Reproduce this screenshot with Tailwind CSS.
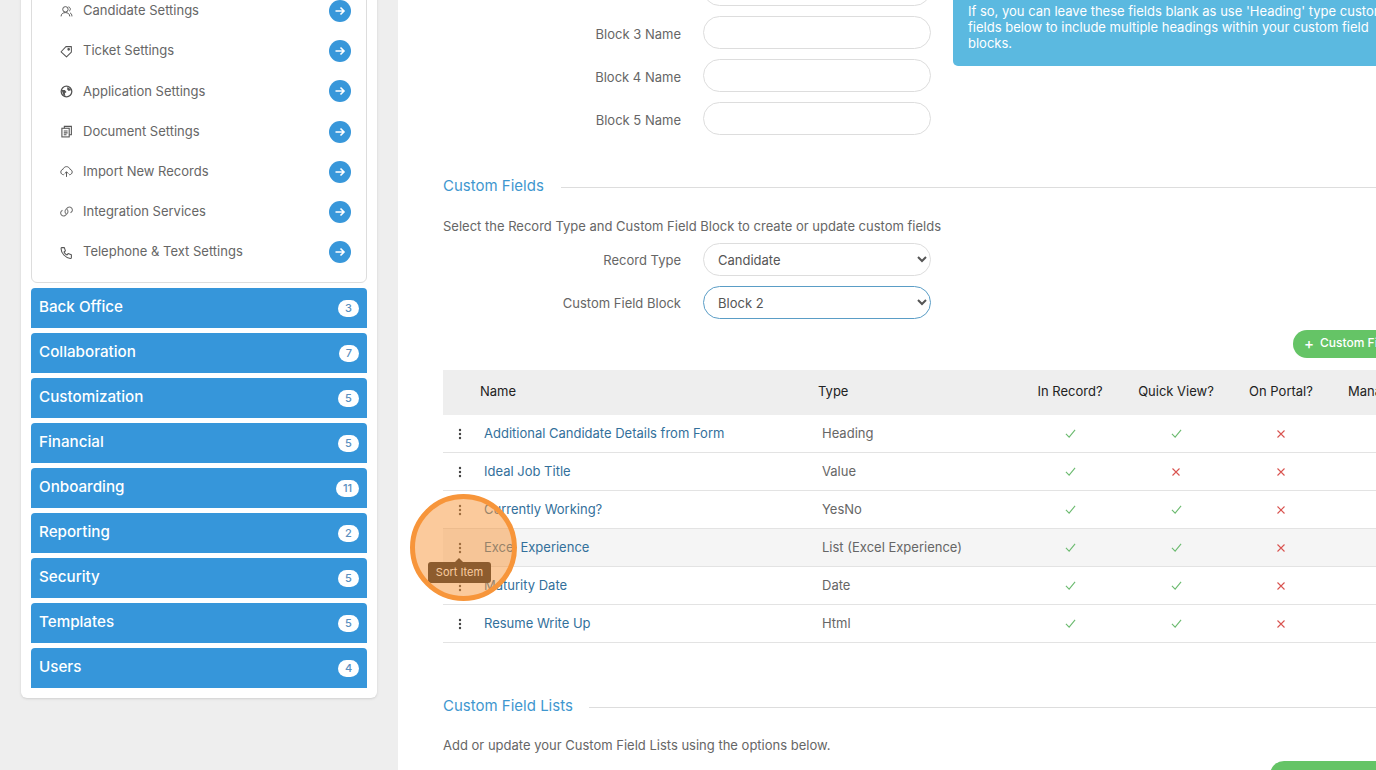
<!DOCTYPE html>
<html lang="en">
<head>
    <meta charset="UTF-8">
    <meta name="viewport" content="width=device-width, initial-scale=1.0">
    <script src="https://cdn.jsdelivr.net/npm/@tailwindcss/browser@4"></script>
    <title>Custom Fields</title>
</head>
<body class="relative h-[770px] w-[1376px] overflow-hidden bg-[#eeeeee] font-['Inter','Liberation_Sans',sans-serif] text-[13px] text-[#666666]">
    <div class="flex h-full items-start">
        <!-- sidebar -->
        <aside class="ml-[21px] mt-[-20px] w-[356px] shrink-0 rounded-md bg-white p-[10px] shadow-sm">
            <div class="rounded-md border border-[#dddddd] pb-[10px]">
                <div class="flex h-[40.17px] items-center pl-[28px] pr-[15px]">
                    <svg class="mr-[10px] h-[13px] w-[13px] shrink-0" viewBox="0 0 24 24" fill="none" stroke="#555" stroke-width="1.800"><circle cx="10" cy="8" r="5"/><path d="M2 21c0-4.500 3.500-7 8-7s8 2.500 8 7M15.500 3.500c2.500.5 4 2.500 3.500 5-.2 1.200-1 2.200-2 2.800M18.500 14.500c2.300 1 3.500 3.200 3.500 6.500"/></svg>
                    <span class="flex-1">Candidate Settings</span>
                    <span class="flex h-[22px] w-[22px] items-center justify-center rounded-full bg-[#3897da]"><svg class="h-[12px] w-[12px]" viewBox="0 0 24 24" fill="none" stroke="#fff" stroke-width="3.200"><path d="M3 12h17M13 5l7 7-7 7"/></svg></span>
                </div>
                <div class="flex h-[40.17px] items-center pl-[28px] pr-[15px]">
                    <svg class="mr-[10px] h-[13px] w-[13px] shrink-0" viewBox="0 0 24 24" fill="none" stroke="#555" stroke-width="1.900"><path d="M11 3h10v10l-9 9-10-9.500z" stroke-linejoin="round"/><circle cx="16" cy="8" r="1.500" fill="#555"/></svg>
                    <span class="flex-1">Ticket Settings</span>
                    <span class="flex h-[22px] w-[22px] items-center justify-center rounded-full bg-[#3897da]"><svg class="h-[12px] w-[12px]" viewBox="0 0 24 24" fill="none" stroke="#fff" stroke-width="3.200"><path d="M3 12h17M13 5l7 7-7 7"/></svg></span>
                </div>
                <div class="flex h-[40.17px] items-center pl-[28px] pr-[15px]">
                    <svg class="mr-[10px] h-[13px] w-[13px] shrink-0" viewBox="0 0 24 24" fill="none" stroke="#555" stroke-width="2.400"><circle cx="12" cy="12" r="9.800"/><path d="M3 9l6 0 3 4-3 2 1 6-4-3zM14 3l7 6-5 2-3-3z" fill="#555" stroke="none"/></svg>
                    <span class="flex-1">Application Settings</span>
                    <span class="flex h-[22px] w-[22px] items-center justify-center rounded-full bg-[#3897da]"><svg class="h-[12px] w-[12px]" viewBox="0 0 24 24" fill="none" stroke="#fff" stroke-width="3.200"><path d="M3 12h17M13 5l7 7-7 7"/></svg></span>
                </div>
                <div class="flex h-[40.17px] items-center pl-[28px] pr-[15px]">
                    <svg class="mr-[10px] h-[13px] w-[13px] shrink-0" viewBox="0 0 24 24" fill="none" stroke="#555" stroke-width="2"><path d="M8 6V2.500h13V18h-4"/><rect x="3.500" y="6" width="13.500" height="16"/><path d="M7 11h7M7 14.500h7M7 18h5"/></svg>
                    <span class="flex-1">Document Settings</span>
                    <span class="flex h-[22px] w-[22px] items-center justify-center rounded-full bg-[#3897da]"><svg class="h-[12px] w-[12px]" viewBox="0 0 24 24" fill="none" stroke="#fff" stroke-width="3.200"><path d="M3 12h17M13 5l7 7-7 7"/></svg></span>
                </div>
                <div class="flex h-[40.17px] items-center pl-[28px] pr-[15px]">
                    <svg class="mr-[10px] h-[13px] w-[13px] shrink-0" viewBox="0 0 24 24" fill="none" stroke="#555" stroke-width="1.800"><path d="M7 18c-3 0-5.500-2-5.500-5 0-2.500 1.700-4.500 4-5C6.500 5 9 3 12 3s5.500 2 6.500 5c2.300.5 4 2.500 4 5 0 3-2.500 5-5.500 5M12 22v-9M8.500 16l3.500-3.500 3.500 3.500"/></svg>
                    <span class="flex-1">Import New Records</span>
                    <span class="flex h-[22px] w-[22px] items-center justify-center rounded-full bg-[#3897da]"><svg class="h-[12px] w-[12px]" viewBox="0 0 24 24" fill="none" stroke="#fff" stroke-width="3.200"><path d="M3 12h17M13 5l7 7-7 7"/></svg></span>
                </div>
                <div class="flex h-[40.17px] items-center pl-[28px] pr-[15px]">
                    <svg class="mr-[10px] h-[13px] w-[13px] shrink-0" viewBox="0 0 24 24" fill="none" stroke="#777" stroke-width="2"><path d="M13 8a5.500 5.500 0 0 1 0 8l-3.500 3.500a5.500 5.500 0 0 1-7.500-7.500l2.500-2.500M11 16a5.500 5.500 0 0 1 0-8l3.500-3.500a5.500 5.500 0 0 1 7.500 7.500l-2.500 2.500"/></svg>
                    <span class="flex-1">Integration Services</span>
                    <span class="flex h-[22px] w-[22px] items-center justify-center rounded-full bg-[#3897da]"><svg class="h-[12px] w-[12px]" viewBox="0 0 24 24" fill="none" stroke="#fff" stroke-width="3.200"><path d="M3 12h17M13 5l7 7-7 7"/></svg></span>
                </div>
                <div class="flex h-[40.17px] items-center pl-[28px] pr-[15px]">
                    <svg class="mr-[10px] h-[13px] w-[13px] shrink-0" viewBox="0 0 24 24" fill="none" stroke="#555" stroke-width="2"><path d="M3 3h5l2 6-2.500 2c1 2.500 3 4.500 5.500 5.500l2-2.500 6 2v5c0 1-1 2-2 2C10 22 2 13 2 5c0-1 .5-2 1-2z" stroke-linejoin="round"/></svg>
                    <span class="flex-1">Telephone &amp; Text Settings</span>
                    <span class="flex h-[22px] w-[22px] items-center justify-center rounded-full bg-[#3897da]"><svg class="h-[12px] w-[12px]" viewBox="0 0 24 24" fill="none" stroke="#fff" stroke-width="3.200"><path d="M3 12h17M13 5l7 7-7 7"/></svg></span>
                </div>
            </div>
            <div class="mt-[5px] flex flex-col gap-[5px] text-white">
                <div class="flex h-[40px] items-center justify-between rounded-t-[4px] bg-[#3696da] pl-[8px] pr-[8px]"><span class="-translate-y-px text-[15.200px] font-medium">Back Office</span><span class="flex h-[17px] min-w-[21px] items-center justify-center rounded-full bg-white px-[6px] text-[11px] font-medium text-[#5a8fc0]">3</span></div>
                <div class="flex h-[40px] items-center justify-between rounded-t-[4px] bg-[#3696da] pl-[8px] pr-[8px]"><span class="-translate-y-px text-[15.200px] font-medium">Collaboration</span><span class="flex h-[17px] min-w-[20px] items-center justify-center rounded-full bg-white px-[6px] text-[11px] font-medium text-[#5a8fc0]">7</span></div>
                <div class="flex h-[40px] items-center justify-between rounded-t-[4px] bg-[#3696da] pl-[8px] pr-[8px]"><span class="-translate-y-px text-[15.200px] font-medium">Customization</span><span class="flex h-[17px] min-w-[21px] items-center justify-center rounded-full bg-white px-[6px] text-[11px] font-medium text-[#5a8fc0]">5</span></div>
                <div class="flex h-[40px] items-center justify-between rounded-t-[4px] bg-[#3696da] pl-[8px] pr-[8px]"><span class="-translate-y-px text-[15.200px] font-medium">Financial</span><span class="flex h-[17px] min-w-[21px] items-center justify-center rounded-full bg-white px-[6px] text-[11px] font-medium text-[#5a8fc0]">5</span></div>
                <div class="flex h-[40px] items-center justify-between rounded-t-[4px] bg-[#3696da] pl-[8px] pr-[8px]"><span class="-translate-y-px text-[15.200px] font-medium">Onboarding</span><span class="flex h-[17px] min-w-[23px] items-center justify-center rounded-full bg-white px-[6px] text-[11px] font-medium text-[#5a8fc0]">11</span></div>
                <div class="flex h-[40px] items-center justify-between rounded-t-[4px] bg-[#3696da] pl-[8px] pr-[8px]"><span class="-translate-y-px text-[15.200px] font-medium">Reporting</span><span class="flex h-[17px] min-w-[21px] items-center justify-center rounded-full bg-white px-[6px] text-[11px] font-medium text-[#5a8fc0]">2</span></div>
                <div class="flex h-[40px] items-center justify-between rounded-t-[4px] bg-[#3696da] pl-[8px] pr-[8px]"><span class="-translate-y-px text-[15.200px] font-medium">Security</span><span class="flex h-[17px] min-w-[21px] items-center justify-center rounded-full bg-white px-[6px] text-[11px] font-medium text-[#5a8fc0]">5</span></div>
                <div class="flex h-[40px] items-center justify-between rounded-t-[4px] bg-[#3696da] pl-[8px] pr-[8px]"><span class="-translate-y-px text-[15.200px] font-medium">Templates</span><span class="flex h-[17px] min-w-[21px] items-center justify-center rounded-full bg-white px-[6px] text-[11px] font-medium text-[#5a8fc0]">5</span></div>
                <div class="flex h-[40px] items-center justify-between rounded-t-[4px] bg-[#3696da] pl-[8px] pr-[8px]"><span class="-translate-y-px text-[15.200px] font-medium">Users</span><span class="flex h-[17px] min-w-[21px] items-center justify-center rounded-full bg-white px-[6px] text-[11px] font-medium text-[#5a8fc0]">4</span></div>
            </div>
        </aside>

        <!-- main panel -->
        <main class="ml-[21px] h-full min-w-0 flex-1 overflow-hidden bg-white pl-[45px]">
            <div class="mt-[-27px] w-[1100px]">
                <div class="flex items-start gap-[22px]">
                    <div class="flex w-[488px] flex-col gap-[10px]">
                        <div class="flex items-center gap-[22px]"><label class="w-[238px] text-right">Block 2 Name</label><input type="text" class="h-[33px] w-[228px] rounded-[17px] border border-[#dddddd] bg-white"></div>
                        <div class="flex items-center gap-[22px]"><label class="w-[238px] translate-y-[2px] text-right">Block 3 Name</label><input type="text" class="h-[33px] w-[228px] rounded-[17px] border border-[#dddddd] bg-white"></div>
                        <div class="flex items-center gap-[22px]"><label class="w-[238px] translate-y-[2px] text-right">Block 4 Name</label><input type="text" class="h-[33px] w-[228px] rounded-[17px] border border-[#dddddd] bg-white"></div>
                        <div class="flex items-center gap-[22px]"><label class="w-[238px] translate-y-[2px] text-right">Block 5 Name</label><input type="text" class="h-[33px] w-[228px] rounded-[17px] border border-[#dddddd] bg-white"></div>
                    </div>
                    <div class="flex h-[93px] w-[560px] flex-col justify-end rounded-b-[5px] bg-[#5bb9e0] pb-[15px] pl-[15px] leading-[16px] whitespace-nowrap text-white">
                        <p>If so, you can leave these fields blank as use 'Heading' type custom</p>
                        <p>fields below to include multiple headings within your custom field</p>
                        <p>blocks.</p>
                    </div>
                </div>

                <section class="mt-[41px]">
                    <div class="flex items-center gap-[17px]">
                        <h3 class="text-[15px] leading-[20px] text-[#3f97cf]">Custom Fields</h3>
                        <div class="h-px flex-1 translate-y-px bg-[#dddddd]"></div>
                    </div>
                    <p class="mt-[20px] leading-[20px]">Select the Record Type and Custom Field Block to create or update custom fields</p>
                    <div class="mt-[7px] flex w-[488px] flex-col gap-[10px]">
                        <div class="flex items-center gap-[22px]"><label class="w-[238px] translate-y-px text-right">Record Type</label><select class="h-[33px] w-[228px] rounded-[17px] border border-[#dddddd] bg-white pl-[10px] text-[13px] text-[#555555]"><option>Candidate</option></select></div>
                        <div class="flex items-center gap-[22px]"><label class="w-[238px] translate-y-px text-right">Custom Field Block</label><select class="h-[33px] w-[228px] rounded-[17px] border border-[#5a9dc6] bg-white pl-[10px] text-[13px] text-[#555555]"><option>Block 2</option></select></div>
                    </div>
                    <div class="mt-[11px] flex h-[28px] pl-[850px]">
                        <button class="flex h-[28px] w-[160px] items-center rounded-full bg-[#65c466] pl-[11px] text-[12px] font-medium text-white"><span class="mr-[6px] -translate-y-px text-[15px] leading-none">+</span><span class="-translate-y-px">Custom Field</span></button>
                    </div>
                    <table class="mt-[12px] w-[1050px] table-fixed border-separate border-spacing-0 text-left">
                        <colgroup><col class="w-[30px]"><col class="w-[345px]"><col class="w-[202px]"><col class="w-[100px]"><col class="w-[112px]"><col class="w-[98px]"><col></colgroup>
                        <thead class="bg-[#eeeeee] text-[#222222]">
                            <tr class="h-[45px]">
                                <th class="font-normal"></th>
                                <th class="pb-[2px] pl-[7px] font-normal">Name</th>
                                <th class="pb-[2px] font-normal">Type</th>
                                <th class="pb-[2px] text-center font-normal">In Record?</th>
                                <th class="pb-[2px] text-center font-normal">Quick View?</th>
                                <th class="pb-[2px] text-center font-normal">On Portal?</th>
                                <th class="pb-[2px] pl-[18px] font-normal">Manage</th>
                            </tr>
                        </thead>
                        <tbody class="[&_td]:border-b [&_td]:border-[#e3e3e3]">
                            <tr class="h-[38px]">
                                <td class="pl-[15px]"><svg class="h-[12px] w-[4px]" viewBox="0 0 4 12" fill="#444"><circle cx="2" cy="2" r="1.200"/><circle cx="2" cy="6" r="1.200"/><circle cx="2" cy="10" r="1.200"/></svg></td>
                                <td class="pl-[11px] text-[#33709b]">Additional Candidate Details from Form</td>
                                <td class="pl-[4px]">Heading</td>
                                <td><svg class="mx-auto h-[11px] w-[11px]" viewBox="0 0 12 12" fill="none" stroke="#6cbb70" stroke-width="1.200"><path d="M1 6.500l3.500 3.500 6.500-8"/></svg></td>
                                <td><svg class="mx-auto h-[11px] w-[11px]" viewBox="0 0 12 12" fill="none" stroke="#6cbb70" stroke-width="1.200"><path d="M1 6.500l3.500 3.500 6.500-8"/></svg></td>
                                <td><svg class="mx-auto h-[10px] w-[10px]" viewBox="0 0 10 10" fill="none" stroke="#d9534f" stroke-width="1.100"><path d="M1.500 1.500l7 7M8.500 1.500l-7 7"/></svg></td>
                                <td></td>
                            </tr>
                            <tr class="h-[38px]">
                                <td class="pl-[15px]"><svg class="h-[12px] w-[4px]" viewBox="0 0 4 12" fill="#444"><circle cx="2" cy="2" r="1.200"/><circle cx="2" cy="6" r="1.200"/><circle cx="2" cy="10" r="1.200"/></svg></td>
                                <td class="pl-[11px] text-[#33709b]">Ideal Job Title</td>
                                <td class="pl-[4px]">Value</td>
                                <td><svg class="mx-auto h-[11px] w-[11px]" viewBox="0 0 12 12" fill="none" stroke="#6cbb70" stroke-width="1.200"><path d="M1 6.500l3.500 3.500 6.500-8"/></svg></td>
                                <td><svg class="mx-auto h-[10px] w-[10px]" viewBox="0 0 10 10" fill="none" stroke="#d9534f" stroke-width="1.100"><path d="M1.500 1.500l7 7M8.500 1.500l-7 7"/></svg></td>
                                <td><svg class="mx-auto h-[10px] w-[10px]" viewBox="0 0 10 10" fill="none" stroke="#d9534f" stroke-width="1.100"><path d="M1.500 1.500l7 7M8.500 1.500l-7 7"/></svg></td>
                                <td></td>
                            </tr>
                            <tr class="h-[38px]">
                                <td class="pl-[15px]"><svg class="h-[12px] w-[4px]" viewBox="0 0 4 12" fill="#444"><circle cx="2" cy="2" r="1.200"/><circle cx="2" cy="6" r="1.200"/><circle cx="2" cy="10" r="1.200"/></svg></td>
                                <td class="pl-[11px] text-[#33709b]">Currently Working?</td>
                                <td class="pl-[4px]">YesNo</td>
                                <td><svg class="mx-auto h-[11px] w-[11px]" viewBox="0 0 12 12" fill="none" stroke="#6cbb70" stroke-width="1.200"><path d="M1 6.500l3.500 3.500 6.500-8"/></svg></td>
                                <td><svg class="mx-auto h-[11px] w-[11px]" viewBox="0 0 12 12" fill="none" stroke="#6cbb70" stroke-width="1.200"><path d="M1 6.500l3.500 3.500 6.500-8"/></svg></td>
                                <td><svg class="mx-auto h-[10px] w-[10px]" viewBox="0 0 10 10" fill="none" stroke="#d9534f" stroke-width="1.100"><path d="M1.500 1.500l7 7M8.500 1.500l-7 7"/></svg></td>
                                <td></td>
                            </tr>
                            <tr class="h-[38px] bg-[#f5f5f5]">
                                <td class="pl-[15px]"><svg class="h-[12px] w-[4px]" viewBox="0 0 4 12" fill="#444"><circle cx="2" cy="2" r="1.200"/><circle cx="2" cy="6" r="1.200"/><circle cx="2" cy="10" r="1.200"/></svg></td>
                                <td class="pl-[11px] text-[#33709b]">Excel Experience</td>
                                <td class="pl-[4px]">List (Excel Experience)</td>
                                <td><svg class="mx-auto h-[11px] w-[11px]" viewBox="0 0 12 12" fill="none" stroke="#6cbb70" stroke-width="1.200"><path d="M1 6.500l3.500 3.500 6.500-8"/></svg></td>
                                <td><svg class="mx-auto h-[11px] w-[11px]" viewBox="0 0 12 12" fill="none" stroke="#6cbb70" stroke-width="1.200"><path d="M1 6.500l3.500 3.500 6.500-8"/></svg></td>
                                <td><svg class="mx-auto h-[10px] w-[10px]" viewBox="0 0 10 10" fill="none" stroke="#d9534f" stroke-width="1.100"><path d="M1.500 1.500l7 7M8.500 1.500l-7 7"/></svg></td>
                                <td></td>
                            </tr>
                            <tr class="h-[38px]">
                                <td class="pl-[15px]"><svg class="h-[12px] w-[4px]" viewBox="0 0 4 12" fill="#444"><circle cx="2" cy="2" r="1.200"/><circle cx="2" cy="6" r="1.200"/><circle cx="2" cy="10" r="1.200"/></svg></td>
                                <td class="pl-[11px] text-[#33709b]">Maturity Date</td>
                                <td class="pl-[4px]">Date</td>
                                <td><svg class="mx-auto h-[11px] w-[11px]" viewBox="0 0 12 12" fill="none" stroke="#6cbb70" stroke-width="1.200"><path d="M1 6.500l3.500 3.500 6.500-8"/></svg></td>
                                <td><svg class="mx-auto h-[11px] w-[11px]" viewBox="0 0 12 12" fill="none" stroke="#6cbb70" stroke-width="1.200"><path d="M1 6.500l3.500 3.500 6.500-8"/></svg></td>
                                <td><svg class="mx-auto h-[10px] w-[10px]" viewBox="0 0 10 10" fill="none" stroke="#d9534f" stroke-width="1.100"><path d="M1.500 1.500l7 7M8.500 1.500l-7 7"/></svg></td>
                                <td></td>
                            </tr>
                            <tr class="h-[38px]">
                                <td class="pl-[15px]"><svg class="h-[12px] w-[4px]" viewBox="0 0 4 12" fill="#444"><circle cx="2" cy="2" r="1.200"/><circle cx="2" cy="6" r="1.200"/><circle cx="2" cy="10" r="1.200"/></svg></td>
                                <td class="pl-[11px] text-[#33709b]">Resume Write Up</td>
                                <td class="pl-[4px]">Html</td>
                                <td><svg class="mx-auto h-[11px] w-[11px]" viewBox="0 0 12 12" fill="none" stroke="#6cbb70" stroke-width="1.200"><path d="M1 6.500l3.500 3.500 6.500-8"/></svg></td>
                                <td><svg class="mx-auto h-[11px] w-[11px]" viewBox="0 0 12 12" fill="none" stroke="#6cbb70" stroke-width="1.200"><path d="M1 6.500l3.500 3.500 6.500-8"/></svg></td>
                                <td><svg class="mx-auto h-[10px] w-[10px]" viewBox="0 0 10 10" fill="none" stroke="#d9534f" stroke-width="1.100"><path d="M1.500 1.500l7 7M8.500 1.500l-7 7"/></svg></td>
                                <td></td>
                            </tr>
                        </tbody>
                    </table>
                </section>

                <section class="mt-[53px]">
                    <div class="flex items-center gap-[16px]">
                        <h3 class="text-[15px] leading-[20px] text-[#3f97cf]">Custom Field Lists</h3>
                        <div class="h-px flex-1 translate-y-px bg-[#dddddd]"></div>
                    </div>
                    <p class="mt-[19px] leading-[20px]">Add or update your Custom Field Lists using the options below.</p>
                    <div class="mt-[6px] pl-[827px]"><div class="h-[28px] w-[160px] rounded-full bg-[#65c466]"></div></div>
                </section>
            </div>
        </main>
    </div>

    <!-- tooltip and click highlight, over the table -->
    <div class="absolute left-[428px] top-[562px] flex h-[21px] w-[63px] items-center justify-center rounded-[3px] bg-[#222222] text-[11px] text-white">
        <span class="absolute left-[27px] top-[-4px] h-0 w-0 border-x-[4px] border-b-[4px] border-x-transparent border-b-[#222222]"></span>
        Sort Item
    </div>
    <div class="absolute left-[410px] top-[494px] h-[107px] w-[107px] rounded-full border-[5px] border-[#f7953a] bg-[#f7953a]/50"></div>
</body>
</html>
